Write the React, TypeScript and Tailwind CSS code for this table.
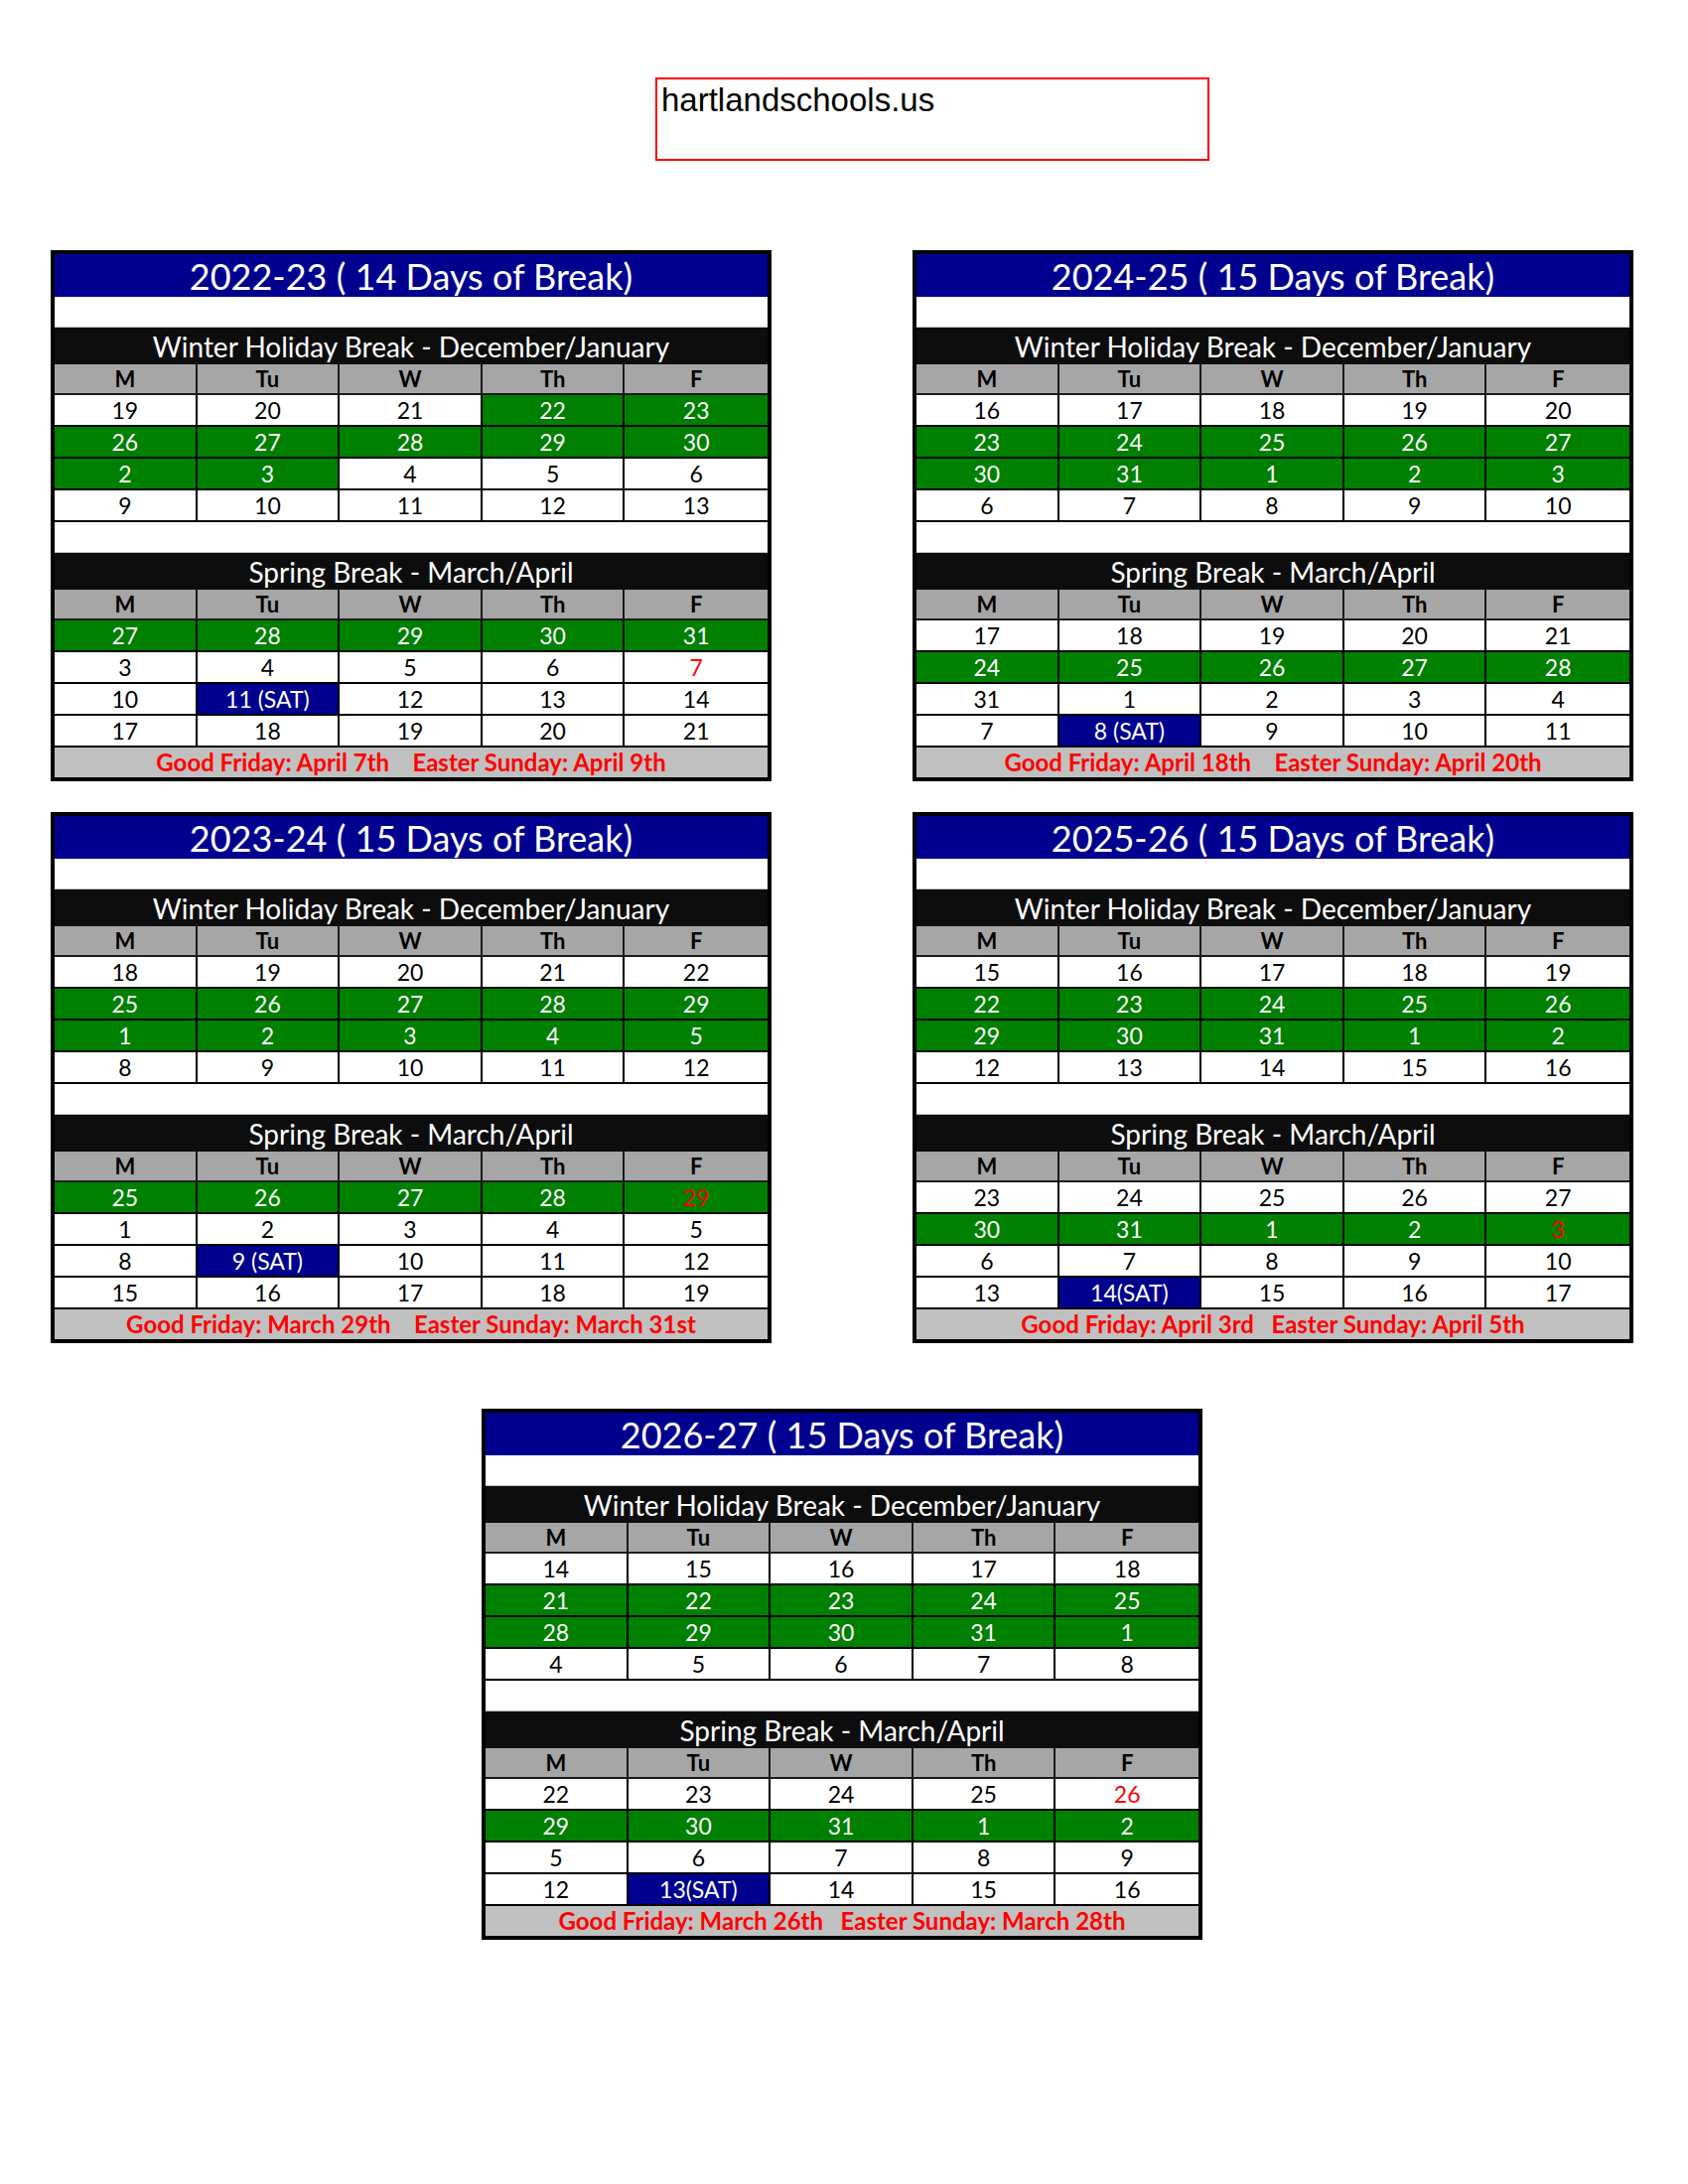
import React from 'react';

// cell codes: plain = black on white, g: = green, b: = blue (SAT), r: = red on white, gr: = red on green
type Section = { title: string; rows: string[][] };
type Year = { title: string; winter: string[][]; spring: string[][]; footer: string };

const days = ['M', 'Tu', 'W', 'Th', 'F'];

const years: Record<string, Year> = {
  y2223: {
    title: '2022-23 ( 14 Days of Break)',
    winter: [
      ['19', '20', '21', 'g:22', 'g:23'],
      ['g:26', 'g:27', 'g:28', 'g:29', 'g:30'],
      ['g:2', 'g:3', '4', '5', '6'],
      ['9', '10', '11', '12', '13'],
    ],
    spring: [
      ['g:27', 'g:28', 'g:29', 'g:30', 'g:31'],
      ['3', '4', '5', '6', 'r:7'],
      ['10', 'b:11 (SAT)', '12', '13', '14'],
      ['17', '18', '19', '20', '21'],
    ],
    footer: 'Good Friday: April 7th    Easter Sunday: April 9th',
  },
  y2425: {
    title: '2024-25 ( 15 Days of Break)',
    winter: [
      ['16', '17', '18', '19', '20'],
      ['g:23', 'g:24', 'g:25', 'g:26', 'g:27'],
      ['g:30', 'g:31', 'g:1', 'g:2', 'g:3'],
      ['6', '7', '8', '9', '10'],
    ],
    spring: [
      ['17', '18', '19', '20', '21'],
      ['g:24', 'g:25', 'g:26', 'g:27', 'g:28'],
      ['31', '1', '2', '3', '4'],
      ['7', 'b:8 (SAT)', '9', '10', '11'],
    ],
    footer: 'Good Friday: April 18th    Easter Sunday: April 20th',
  },
  y2324: {
    title: '2023-24 ( 15 Days of Break)',
    winter: [
      ['18', '19', '20', '21', '22'],
      ['g:25', 'g:26', 'g:27', 'g:28', 'g:29'],
      ['g:1', 'g:2', 'g:3', 'g:4', 'g:5'],
      ['8', '9', '10', '11', '12'],
    ],
    spring: [
      ['g:25', 'g:26', 'g:27', 'g:28', 'gr:29'],
      ['1', '2', '3', '4', '5'],
      ['8', 'b:9 (SAT)', '10', '11', '12'],
      ['15', '16', '17', '18', '19'],
    ],
    footer: 'Good Friday: March 29th    Easter Sunday: March 31st',
  },
  y2526: {
    title: '2025-26 ( 15 Days of Break)',
    winter: [
      ['15', '16', '17', '18', '19'],
      ['g:22', 'g:23', 'g:24', 'g:25', 'g:26'],
      ['g:29', 'g:30', 'g:31', 'g:1', 'g:2'],
      ['12', '13', '14', '15', '16'],
    ],
    spring: [
      ['23', '24', '25', '26', '27'],
      ['g:30', 'g:31', 'g:1', 'g:2', 'gr:3'],
      ['6', '7', '8', '9', '10'],
      ['13', 'b:14(SAT)', '15', '16', '17'],
    ],
    footer: 'Good Friday: April 3rd   Easter Sunday: April 5th',
  },
  y2627: {
    title: '2026-27 ( 15 Days of Break)',
    winter: [
      ['14', '15', '16', '17', '18'],
      ['g:21', 'g:22', 'g:23', 'g:24', 'g:25'],
      ['g:28', 'g:29', 'g:30', 'g:31', 'g:1'],
      ['4', '5', '6', '7', '8'],
    ],
    spring: [
      ['22', '23', '24', '25', 'r:26'],
      ['g:29', 'g:30', 'g:31', 'g:1', 'g:2'],
      ['5', '6', '7', '8', '9'],
      ['12', 'b:13(SAT)', '14', '15', '16'],
    ],
    footer: 'Good Friday: March 26th   Easter Sunday: March 28th',
  },
};

function cellStyle(code: string) {
  const i = code.indexOf(':');
  const kind = i === -1 ? '' : code.slice(0, i);
  const text = i === -1 ? code : code.slice(i + 1);
  switch (kind) {
    case 'g':
      return { text, cls: 'bg-[#008000] text-white' };
    case 'gr':
      return { text, cls: 'bg-[#008000] text-[#ff0000]' };
    case 'b':
      return { text, cls: 'bg-[#00008f] text-white' };
    case 'r':
      return { text, cls: 'bg-white text-[#ff0000]' };
    default:
      return { text, cls: 'bg-white text-black' };
  }
}

function BreakSection({ title, rows }: Section) {
  return (
    <>
      <div className="h-[31px] bg-white border-b border-[#bfbfbf]" />
      <div className="h-[37px] bg-[#0d0d0d] text-white text-[28px] leading-none flex items-center justify-center">
        {title}
      </div>
      <div className="grid grid-cols-5 h-[31px]">
        {days.map((d, i) => (
          <div
            key={d}
            className={`bg-[#a6a6a6] border-b-2 border-[#1a1a1a] text-black font-bold text-[22px] leading-none flex items-center justify-center ${
              i < 4 ? 'border-r-2' : ''
            }`}
          >
            {d}
          </div>
        ))}
      </div>
      {rows.map((row, r) => (
        <div key={r} className="grid grid-cols-5 h-[32px]">
          {row.map((code, i) => {
            const c = cellStyle(code);
            return (
              <div
                key={i}
                className={`${c.cls} border-b-2 border-black text-[23px] leading-none flex items-center justify-center ${
                  i < 4 ? 'border-r-2' : ''
                }`}
              >
                {c.text}
              </div>
            );
          })}
        </div>
      ))}
    </>
  );
}

function YearTable({ year }: { year: Year }) {
  return (
    <div className="w-[726px] h-[535px] border-4 border-black flex flex-col">
      <div className="h-[43px] bg-[#00008f] text-white text-[36px] leading-none flex items-center justify-center">
        {year.title}
      </div>
      <BreakSection title="Winter Holiday Break - December/January" rows={year.winter} />
      <BreakSection title="Spring Break - March/April" rows={year.spring} />
      <div className="flex-1 bg-[#c0c0c0] text-[#ff0000] font-bold text-[24px] leading-none flex items-center justify-center whitespace-pre">
        {year.footer}
      </div>
    </div>
  );
}

export default function App() {
  return (
    <div className="w-[1700px] h-[2200px] bg-white font-['Lato','Liberation_Sans',sans-serif]">
      <div className="pt-[78px] pl-[660px]">
        <div className="w-[558px] h-[84px] border-2 border-[#ff0000] pt-[4px] pl-[4px] font-['Liberation_Sans',Arial,sans-serif] text-[33px] leading-none text-black">
          hartlandschools.us
        </div>
      </div>
      <div className="mt-[90px] ml-[51px] grid grid-cols-[726px_726px] gap-x-[142px] gap-y-[31px] w-fit">
        <YearTable year={years.y2223} />
        <YearTable year={years.y2425} />
        <YearTable year={years.y2324} />
        <YearTable year={years.y2526} />
      </div>
      <div className="mt-[66px] ml-[485px]">
        <YearTable year={years.y2627} />
      </div>
    </div>
  );
}
